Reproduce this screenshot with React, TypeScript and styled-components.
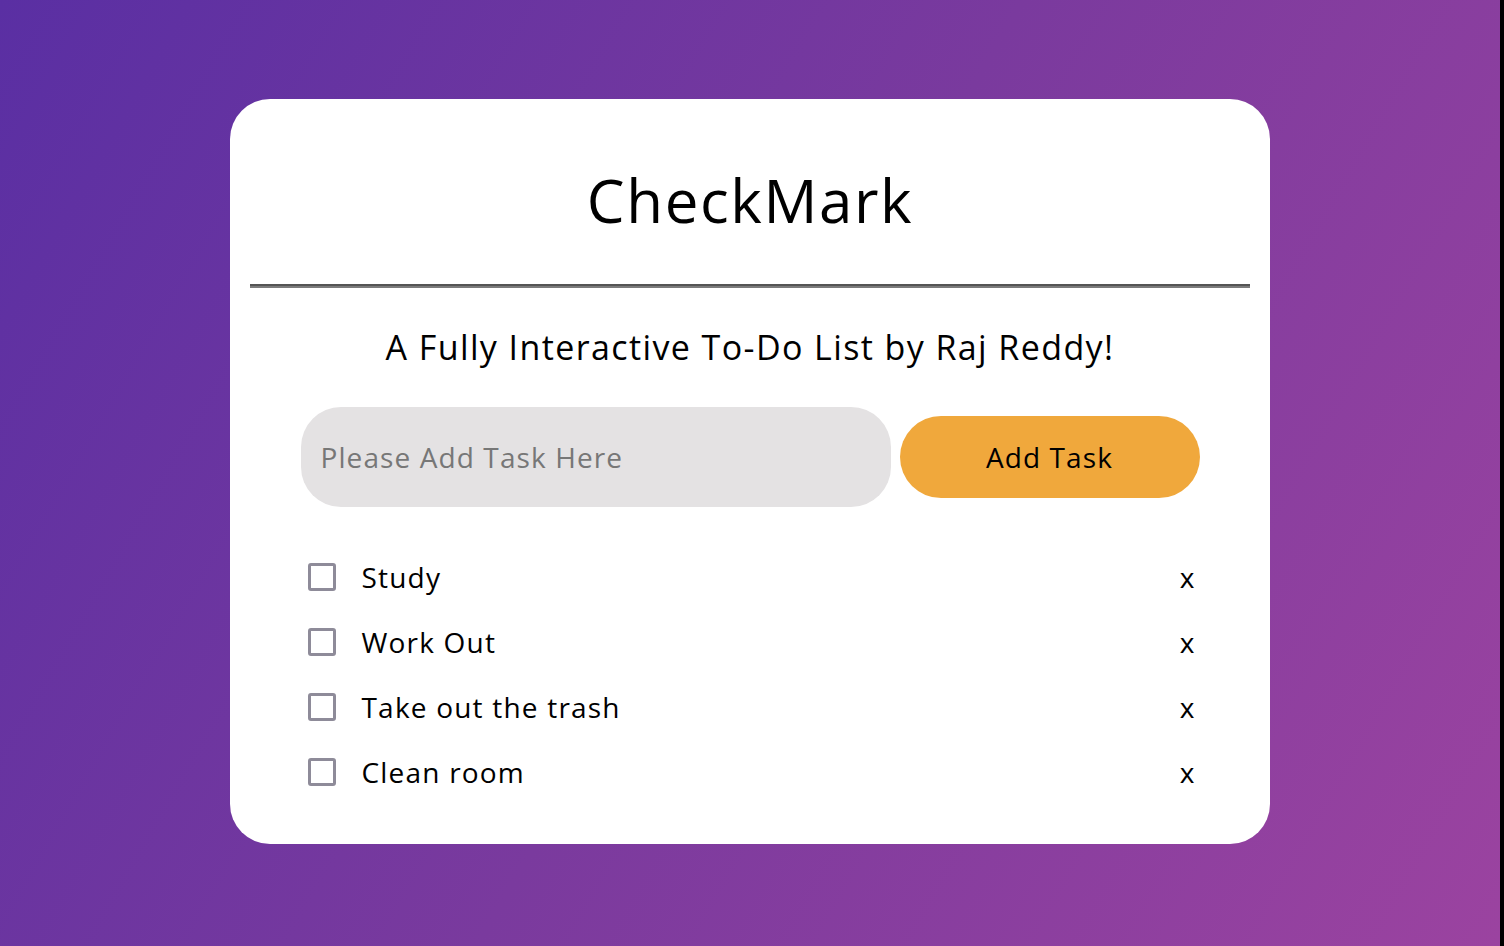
import styled, { createGlobalStyle } from "styled-components";

const GlobalStyle = createGlobalStyle`
  html, body {
    margin: 0;
    padding: 0;
    background: #000;
  }
  body {
    font-family: "Open Sans", "Liberation Sans", sans-serif;
  }
`;

const Page = styled.div`
  width: calc(100vw - 4px);
  height: 100vh;
  background: linear-gradient(120deg, #5a2fa3 0%, #7a3a9e 50%, #9b43a0 100%);
  display: flex;
  justify-content: center;
  align-items: flex-start;
  padding-top: 99px;
  box-sizing: border-box;
`;

const Card = styled.div`
  width: 1040px;
  height: 745px;
  background: #fff;
  border-radius: 40px;
  padding: 0 20px;
  box-sizing: border-box;
  display: flex;
  flex-direction: column;
  align-items: center;
`;

const Header = styled.div`
  width: 100%;
  height: 185px;
  padding-top: 16px;
  box-sizing: border-box;
  display: flex;
  align-items: center;
  justify-content: center;
`;

const Title = styled.h1`
  margin: 0;
  font-size: 60px;
  font-weight: 400;
  letter-spacing: 1.6px;
  line-height: 1;
  color: #000;
`;

const Divider = styled.div`
  width: 100%;
  height: 2px;
  background: #555;
  border-bottom: 2px solid #7c7c7c;
`;

const Subtitle = styled.h2`
  margin: 39px 0 0;
  font-size: 34px;
  font-weight: 500;
  letter-spacing: 1.4px;
  line-height: 40px;
  color: #000;
`;

const Form = styled.form`
  width: 899px;
  margin-top: 40px;
  display: flex;
  align-items: center;
  gap: 9px;
`;

const Input = styled.input`
  width: 590px;
  height: 100px;
  border: none;
  border-radius: 40px;
  background: #e4e2e3;
  padding: 0 20px;
  box-sizing: border-box;
  font-family: inherit;
  font-size: 28px;
  letter-spacing: 1.1px;
  color: #000;
  outline: none;

  &::placeholder {
    color: #777;
  }
`;

const AddButton = styled.button`
  width: 300px;
  height: 82px;
  border: none;
  border-radius: 41px;
  background: #f0a83c;
  font-family: inherit;
  font-size: 28px;
  letter-spacing: 1.1px;
  color: #000;
`;

const TaskList = styled.ul`
  list-style: none;
  width: 899px;
  margin: 37px 0 0;
  padding: 0;
  display: flex;
  flex-direction: column;
`;

const TaskRow = styled.li`
  height: 65px;
  display: flex;
  align-items: center;
  padding: 0 4px 0 7px;
`;

const Check = styled.span`
  width: 22px;
  height: 22px;
  border: 3px solid #8e8b99;
  border-radius: 3px;
  flex-shrink: 0;
`;

const TaskText = styled.span`
  flex: 1;
  margin-left: 26px;
  font-size: 28px;
  letter-spacing: 1.2px;
  color: #000;
`;

const Remove = styled.span`
  font-size: 28px;
  color: #000;
  padding-right: 1px;
`;

const tasks = ["Study", "Work Out", "Take out the trash", "Clean room"];

const App = () => {
  return (
    <>
      <GlobalStyle />
      <Page>
        <Card>
          <Header>
            <Title>CheckMark</Title>
          </Header>
          <Divider />
          <Subtitle>A Fully Interactive To-Do List by Raj Reddy!</Subtitle>
          <Form onSubmit={(e) => e.preventDefault()}>
            <Input placeholder="Please Add Task Here" />
            <AddButton type="submit">Add Task</AddButton>
          </Form>
          <TaskList>
            {tasks.map((t) => (
              <TaskRow key={t}>
                <Check />
                <TaskText>{t}</TaskText>
                <Remove>x</Remove>
              </TaskRow>
            ))}
          </TaskList>
        </Card>
      </Page>
    </>
  );
};

export default App;
